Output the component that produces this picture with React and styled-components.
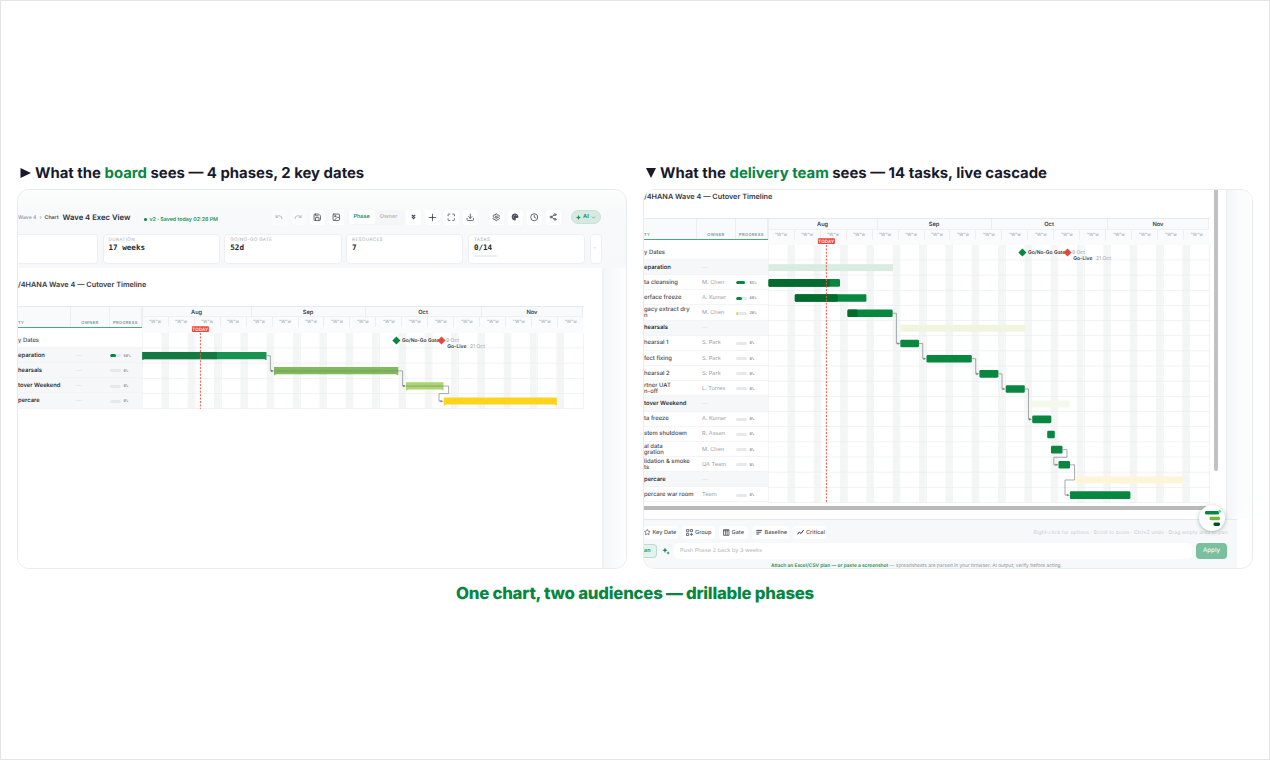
import React from "react";
import styled, { createGlobalStyle } from "styled-components";
import {
  Undo,
  Redo,
  Save,
  Image as ImageIcon,
  Maximize,
  Download,
  Settings,
  Clock,
  Share2,
  ChevronDown,
  Star,
} from "lucide-react";

const green = "#06863f";
const ink = "#181a2c";
const WEEK = 26.33;
const CHART_WIDTH = 441.7;
const ROW = 15.16;

const GlobalStyle = createGlobalStyle`
  * {
    box-sizing: border-box;
  }

  body {
    margin: 0;
    background: #fff;
    font-family: Inter, "Liberation Sans", sans-serif;
    text-rendering: geometricPrecision;
  }
`;

const Page = styled.main`
  width: 1270px;
  height: 760px;
  padding: 161.5px 0 0 16px;
  border: 1px solid #e3e4e6;
  overflow: hidden;
`;

const Columns = styled.div`
  display: grid;
  grid-template-columns: 610px 610px;
  column-gap: 16px;
`;

const Heading = styled.h2`
  display: flex;
  align-items: center;
  gap: 4px;
  height: 20px;
  margin: 0 0 6.5px;
  padding-left: 3px;
  color: ${ink};
  font-size: 14.9px;
  font-weight: 700;
  letter-spacing: 0;
  white-space: nowrap;

  em {
    color: ${green};
    font-style: normal;
  }

  svg {
    flex: none;
  }
`;

const Frame = styled.section`
  display: flex;
  flex-direction: column;
  height: 380px;
  border: 1px solid #e9ecef;
  border-radius: 12px;
  background: ${(props) => props.$background};
  overflow: hidden;
`;

const Footer = styled.p`
  margin: 12.5px 0 0;
  padding-right: 16px;
  color: ${green};
  font-size: 16.8px;
  font-weight: 800;
  line-height: 24px;
  letter-spacing: -0.23px;
  text-align: center;
`;

/* exec view */

const TopBar = styled.div`
  display: flex;
  align-items: center;
  height: 43.6px;
  padding: 11.4px 0 0;
  white-space: nowrap;
`;

const Crumbs = styled.div`
  display: flex;
  align-items: center;
  flex: none;
  width: 251.6px;
  color: #8b929b;
  font-size: 5.2px;
  font-weight: 500;
  padding-top: 2px;

  span + span {
    margin-left: 3px;
  }

  b {
    margin: 0 0 0 3px;
    color: #454c56;
    font-weight: 600;
  }

  strong {
    margin: -1px 0 0 4px;
    color: #2a303a;
    font-size: 7.7px;
    font-weight: 600;
  }

  i {
    width: 3px;
    height: 3px;
    margin: 2px 3px 0 13px;
    border-radius: 50%;
    background: ${green};
  }

  small {
    margin-top: 3px;
    color: #22935a;
    font-size: 5.3px;
    font-weight: 600;
  }
`;

const ToolButton = styled.span`
  display: flex;
  align-items: center;
  justify-content: center;
  flex: none;
  width: 15px;
  height: 15px;
  margin: 0 ${(props) => (props.$last ? "9px" : "2px")} 0 2px;
  border-radius: 3px;
  background: ${(props) => (props.$faded ? "#fafbfc" : "#fff")};
  color: ${(props) => (props.$faded ? "#a9b0b7" : "#454b55")};
`;

const Switcher = styled.div`
  display: flex;
  align-items: center;
  flex: none;
  width: 56px;
  height: 15px;
  margin: 0 0 0 2px;
  padding: 1px;
  border-radius: 4px;
  background: #f4f6f7;
  font-size: 5.5px;
  font-weight: 600;
`;

const SwitchItem = styled.span`
  width: ${(props) => (props.$active ? "26px" : "28px")};
  border-radius: 3px;
  background: ${(props) => (props.$active ? "#fff" : "transparent")};
  color: ${(props) => (props.$active ? "#25925a" : "#b4bac1")};
  line-height: 14px;
  text-align: center;
`;

const AiButton = styled.div`
  display: flex;
  align-items: center;
  justify-content: center;
  gap: 2px;
  width: 30px;
  height: 14px;
  margin-left: 8.4px;
  border: 1px solid #c9e2d7;
  border-radius: 7px;
  background: #d6eae1;
  color: #298b62;
  font-size: 5.6px;
  font-weight: 700;
`;

const Stats = styled.div`
  display: flex;
  gap: 4.5px;
  height: 34.4px;
`;

const Stat = styled.div`
  flex: none;
  width: ${(props) => props.$width || 117.3}px;
  height: 30px;
  padding: ${(props) => (props.$narrow ? "9px 0 0 3px" : "3.5px 5px")};
  border: 1px solid #edf0f2;
  border-left-width: ${(props) => (props.$cut ? 0 : "1px")};
  border-radius: ${(props) => (props.$cut ? "0 4px 4px 0" : "4px")};
  background: #fff;
`;

const StatLabel = styled.div`
  color: #a5abb3;
  font-size: 4.6px;
  line-height: 5px;
  letter-spacing: 0.35px;
`;

const StatValue = styled.div`
  color: #23272f;
  font-family: "DejaVu Sans Mono", monospace;
  font-size: 7.6px;
  font-weight: 700;
  line-height: 10px;
`;

const StatBar = styled.div`
  width: 23px;
  height: 2px;
  margin-top: 2px;
  border-radius: 1px;
  background: #eceff1;
`;

const StatDots = styled.div`
  color: #777e87;
  font-size: 6px;
  line-height: 10px;
`;

const ExecBody = styled.div`
  display: flex;
  flex: 1;
`;

const Sheet = styled.div`
  width: ${(props) => props.$width}px;
  background: #fff;
`;

const ExecGutter = styled.div`
  width: 24px;
  background: linear-gradient(90deg, #eef0f2 0, #f4f6f7 3px, #f9fafb 12px, #fdfdfe 24px);
`;

const ChartTitle = styled.h3`
  margin: 0;
  padding-top: ${(props) => props.$top}px;
  height: ${(props) => props.$height}px;
  color: #333943;
  font-size: 7.3px;
  font-weight: 600;
  line-height: 12px;
  white-space: nowrap;
`;

/* gantt */

const GanttLayout = styled.div`
  display: flex;
  width: 566px;
  border-top: 1px solid #e8ebee;
`;

const List = styled.div`
  flex: none;
  width: 123.6px;
`;

const ListHead = styled.div`
  display: grid;
  grid-template-columns: 53px 39px 31.6px;
  height: 20.6px;
  margin-bottom: 5.2px;
  border-bottom: 1px solid #45ad77;
  background: #f8fafb;
  color: #8d949d;
  font-size: 4.1px;
  font-weight: 600;
  letter-spacing: 0.35px;

  span {
    padding-top: 13px;
    border-right: 1px solid #eceff2;
    line-height: 6px;
    text-align: center;
  }

  span:first-child {
    text-align: left;
  }
`;

const ListRow = styled.div`
  display: grid;
  grid-template-columns: 53px 39px 31.6px;
  align-items: center;
  height: ${ROW}px;
  padding-top: 1.4px;
  border-bottom: 1px solid #f2f4f6;
  background: ${(props) => (props.$group ? "#f5f7f9" : "#fff")};
  color: ${(props) => (props.$group ? "#2e343d" : "#3f4651")};
  font-size: 5.85px;
  font-weight: ${(props) => (props.$group ? 600 : 500)};
  line-height: 6px;
  white-space: pre;
`;

const Owner = styled.span`
  padding-left: 5px;
  color: ${(props) => (props.$empty ? "#dde1e4" : "#989ea6")};
  font-size: 5.6px;
  font-weight: 400;
`;

const Progress = styled.span`
  display: flex;
  align-items: center;
  gap: 3px;
  color: #8d939b;
  font-family: "DejaVu Sans Mono", monospace;
  font-size: 3.9px;
  font-weight: 700;
`;

const ProgressTrack = styled.span`
  width: 10.5px;
  height: 3px;
  border-radius: 2px;
  background: #e6e9ec;
  overflow: hidden;
`;

const ProgressFill = styled.span`
  display: block;
  height: 100%;
  border-radius: 2px;
  background: ${(props) => (props.$low ? "#f5d224" : green)};
`;

const Plot = styled.div`
  width: ${CHART_WIDTH}px;
`;

const Months = styled.div`
  display: grid;
  grid-template-columns: 109px 114px 116px 1fr;
  height: 10.5px;
  border-left: 1px solid #eceff2;
  border-bottom: 1px solid #eef0f3;
  background: #f9fafb;
  color: #3b424c;
  font-size: 5.7px;
  font-weight: 600;
  line-height: 11px;
  text-align: center;

  span {
    border-right: 1px solid #eceff2;
  }
`;

const Weeks = styled.div`
  display: flex;
  height: 15.3px;
  background: #fafbfc;
  color: #949ba4;
  font-size: 4.4px;
  line-height: 12px;
  text-align: center;

  span {
    flex: 0 1 ${WEEK}px;
    height: 10px;
    border-left: 1px solid #edeff2;
  }
`;

const Svg = styled.svg`
  display: block;
  overflow: visible;
  font-family: Inter, sans-serif;
`;

const rowMiddle = (row) => row * ROW + ROW / 2;

const Diamond = ({ x, y, color }) => (
  <path d={`M${x - 4} ${y}L${x} ${y - 4}L${x + 4} ${y}L${x} ${y + 4}Z`} fill={color} />
);

const Bar = ({ row, from, to, done, color, doneColor, kind }) => {
  const y = rowMiddle(row) - 3.8;
  const width = to - from;
  if (kind === "ghost") {
    return <rect x={from} y={y + 0.2} width={width} height="7" fill={color} />;
  }
  if (kind === "summary") {
    return (
      <g fill={color}>
        <path d={`M${from} ${y}H${to}V${y + 8.4}L${to - 2} ${y + 7.2}H${from + 2}L${from} ${y + 8.4}Z`} />
        {done && <rect x={from} y={y} width={done - from} height="7.2" fill={doneColor} />}
      </g>
    );
  }
  return (
    <g>
      <rect x={from} y={y} width={width} height="7.6" rx="1.3" fill="#07873f" />
      {done && <rect x={from} y={y} width={done - from} height="7.6" rx="1.3" fill="#046a2e" />}
    </g>
  );
};

const Gantt = ({ rows, bars, links }) => {
  const height = rows.length * ROW;
  return (
    <GanttLayout>
      <List>
        <ListHead>
          <span>TY</span>
          <span>OWNER</span>
          <span>PROGRESS</span>
        </ListHead>
        {rows.map((row) => (
          <ListRow key={row.name} $group={row.group}>
            <span>{row.name}</span>
            <Owner $empty={!row.owner}>{row.owner || (row.group ? "—" : "")}</Owner>
            {row.progress !== undefined && (
              <Progress>
                <ProgressTrack>
                  <ProgressFill $low={row.progress < 30} style={{ width: `${row.progress}%` }} />
                </ProgressTrack>
                {row.progress}%
              </Progress>
            )}
          </ListRow>
        ))}
      </List>
      <Plot>
        <Months>
          {["Aug", "Sep", "Oct", "Nov"].map((month) => (
            <span key={month}>{month}</span>
          ))}
        </Months>
        <Weeks>
          {Array.from({ length: 17 }, (_, i) => (
            <span key={i}>"W"w</span>
          ))}
        </Weeks>
        <Svg width={CHART_WIDTH} height={height}>
          {Array.from({ length: 17 }, (_, i) => (
            <g key={i}>
              {i < 16 && <rect x={i * WEEK + 19.4} width="6.6" height={height} fill="#f4f5f5" />}
              <rect x={i * WEEK} width="0.6" height={height} fill="#eceef0" />
            </g>
          ))}
          {rows.map((row, i) => (
            <rect key={row.name} y={(i + 1) * ROW - 0.6} width={CHART_WIDTH} height="0.7" fill="#ebedef" />
          ))}
          <rect x={CHART_WIDTH - 0.6} width="0.6" height={height} fill="#e8ebee" />
          {bars.map((bar) => (
            <Bar key={`${bar.row}-${bar.from}`} {...bar} />
          ))}
          {links.map((link) => (
            <g key={link.d} fill="none" stroke="#80868d" strokeWidth="0.7">
              <path d={link.d} />
              <path
                d={`M${link.x - 3} ${link.y - 1.3}L${link.x} ${link.y}L${link.x - 3} ${link.y + 1.3}Z`}
                fill="#80868d"
                stroke="none"
              />
            </g>
          ))}
          <path d={`M58.4 0V${height}`} stroke="#f0574b" strokeWidth="1" strokeDasharray="2 1.4" />
          <rect x="49.9" y="-6.8" width="17" height="5.8" rx="0.8" fill="#ee443a" />
          <text x="58.4" y="-2.4" textAnchor="middle" fill="#fff" fontSize="4.4" fontWeight="600" letterSpacing="0.2">
            TODAY
          </text>
          <text x="304" y="9.4" fill="#9ba1a9" fontSize="5">
            9 Oct
          </text>
          <Diamond x={254.4} y={7.6} color="#07873f" />
          <text x="260" y="9.4" fill="#363d47" fontSize="5" fontWeight="600">
            Go/No-Go Gate
          </text>
          <Diamond x={299.5} y={7.6} color="#ee443a" />
          <text x="305.3" y="15.4" fill="#363d47" fontSize="5" fontWeight="600">
            Go-Live
          </text>
          <text x="328" y="15.4" fill="#9ba1a9" fontSize="5">
            21 Oct
          </text>
        </Svg>
      </Plot>
    </GanttLayout>
  );
};

const execRows = [
  { name: "y Dates" },
  { name: "eparation", group: true, progress: 60 },
  { name: "hearsals", group: true, progress: 0 },
  { name: "tover Weekend", group: true, progress: 0 },
  { name: "percare", group: true, progress: 0 },
];

const execBars = [
  { row: 1, from: 0.3, to: 124.5, done: 75, color: "#1a9250", doneColor: "#147a42", kind: "summary" },
  { row: 2, from: 132, to: 256.3, color: "#7fbb56", kind: "summary" },
  { row: 3, from: 264, to: 301.5, color: "#abd56d", kind: "summary" },
  { row: 4, from: 301.8, to: 414.8, color: "#fdd41b", kind: "summary" },
];

const mid = rowMiddle;

const execLinks = [
  { d: `M124.3 ${mid(1)}H128.4V${mid(2)}H131`, x: 132, y: mid(2) },
  { d: `M132 ${mid(2)}H260.6V${mid(3)}H263`, x: 264, y: mid(3) },
  { d: `M264 ${mid(3)}H306.6V${mid(3) + 7.6}H297V${mid(4)}H300`, x: 301.5, y: mid(4) },
];

const teamRows = [
  { name: "y Dates" },
  { name: "eparation", group: true },
  { name: "ta cleansing", owner: "M. Chen", progress: 85 },
  { name: "erface freeze", owner: "A. Kumar", progress: 60 },
  { name: "gacy extract dry\nn", owner: "M. Chen", progress: 20 },
  { name: "hearsals", group: true },
  { name: "hearsal 1", owner: "S. Park", progress: 0 },
  { name: "fect fixing", owner: "S. Park", progress: 0 },
  { name: "hearsal 2", owner: "S. Park", progress: 0 },
  { name: "rtner UAT\nn-off", owner: "L. Torres", progress: 0 },
  { name: "tover Weekend", group: true },
  { name: "ta freeze", owner: "A. Kumar", progress: 0 },
  { name: "stem shutdown", owner: "R. Assan", progress: 0 },
  { name: "al data\ngration", owner: "M. Chen", progress: 0 },
  { name: "lidation & smoke\nts", owner: "QA Team", progress: 0 },
  { name: "percare", group: true },
  { name: "percare war room", owner: "Team", progress: 0 },
];

const teamBars = [
  { row: 1, from: 0.5, to: 125, color: "#d9ece1", kind: "ghost" },
  { row: 2, from: 0.5, to: 72, done: 61.7 },
  { row: 3, from: 26.8, to: 98.4, done: 69.8 },
  { row: 4, from: 79.5, to: 124.7, done: 89.5 },
  { row: 5, from: 132.5, to: 257, color: "#f1f5df", kind: "ghost" },
  { row: 6, from: 132.3, to: 151 },
  { row: 7, from: 158.5, to: 203.8 },
  { row: 8, from: 211.4, to: 230.4 },
  { row: 9, from: 237.7, to: 256.8 },
  { row: 10, from: 263.8, to: 302, color: "#f4f9ec", kind: "ghost" },
  { row: 11, from: 264.2, to: 283.3 },
  { row: 12, from: 279.2, to: 286.8 },
  { row: 13, from: 283, to: 294.5 },
  { row: 14, from: 290.5, to: 302 },
  { row: 15, from: 308, to: 415, color: "#fef5d8", kind: "ghost" },
  { row: 16, from: 301.9, to: 362.4 },
];

const teamLinks = [
  { d: `M124.5 ${mid(4)}H128.4V${mid(6)}H131`, x: 132.3, y: mid(6) },
  { d: `M151 ${mid(6)}H154.7V${mid(7)}H157`, x: 158.5, y: mid(7) },
  { d: `M203.8 ${mid(7)}H207.7V${mid(8)}H210`, x: 211.3, y: mid(8) },
  { d: `M230.3 ${mid(8)}H234V${mid(9)}H236`, x: 237.6, y: mid(9) },
  { d: `M256.8 ${mid(9)}H260.5V${mid(11)}H263`, x: 264, y: mid(11) },
  { d: `M294.4 ${mid(13)}H299V${mid(13) + 7.6}H285.8V${mid(14)}H289`, x: 290.4, y: mid(14) },
  { d: `M302 ${mid(14)}H306.6V${mid(15)}H297V${mid(16)}H300`, x: 301.8, y: mid(16) },
];

/* delivery view */

const TeamTop = styled.div`
  display: flex;
  height: 329px;
`;

const TeamSheet = styled.div`
  width: 583.5px;
  height: 329px;
  border-right: 1px solid #eaedf0;
  background: #fff;
`;

const SheetRow = styled.div`
  display: flex;
  height: 315px;
  overflow: hidden;
`;

const ScrollThumb = styled.div`
  width: 4px;
  height: 281px;
  margin-left: 4px;
  border-radius: 0 0 2px 2px;
  background: #c1c1c2;
`;

const HorizontalThumb = styled.div`
  width: 564px;
  height: 3.6px;
  margin-top: 1px;
  background: #bababb;
`;

const TeamGutter = styled.div`
  width: 25.5px;
  background: linear-gradient(90deg, #f3f5f6 0, #f9fafb 9px, #fbfcfc 10px, #fdfdfd 26px);
`;

const TeamBottom = styled.div`
  width: 592.5px;
  height: 50px;
  padding-top: 6px;
  border-top: 1px solid #e6e9eb;
  background: #f6f8f9;
  white-space: nowrap;
`;

const Actions = styled.div`
  display: flex;
  align-items: center;
  gap: 4px;
  height: 13px;
`;

const Action = styled.span`
  display: flex;
  align-items: center;
  gap: 2px;
  flex: none;
  width: ${(props) => props.$width}px;
  height: 13px;
  padding-left: ${(props) => (props.$first ? 0 : "4px")};
  border-radius: 3px;
  background: #fff;
  color: #4c535d;
  font-size: 5.6px;
  font-weight: 500;
`;

const Hint = styled.span`
  margin-left: auto;
  margin-right: 9px;
  color: #c8cdd2;
  font-size: 5.1px;
  letter-spacing: 0.1px;
`;

const Prompt = styled.div`
  display: flex;
  align-items: center;
  height: 16px;
  margin-top: 4px;
`;

const PlanButton = styled.span`
  width: 13px;
  height: 14px;
  border: 1px solid #b9dccb;
  border-left: 0;
  border-radius: 0 4px 4px 0;
  background: #e4f2eb;
  color: #30875c;
  font-size: 5.5px;
  font-weight: 600;
  line-height: 12px;
`;

const PromptInput = styled.span`
  width: 518px;
  height: 16px;
  margin-left: 4px;
  padding-left: 6px;
  border-radius: 5px;
  background: #fff;
  color: #b1b6bc;
  font-size: 5.6px;
  line-height: 16px;
`;

const Apply = styled.span`
  width: 31px;
  height: 16px;
  margin-left: 4px;
  border-radius: 4px;
  background: #7ac0a0;
  color: #e9f8f0;
  font-size: 6.2px;
  font-weight: 500;
  line-height: 16px;
  text-align: center;
`;

const Note = styled.div`
  margin-top: 3.7px;
  padding-left: 127px;
  color: #8b939b;
  font-size: 4.85px;
  line-height: 7px;

  b {
    color: #1c8f53;
    font-weight: 600;
  }
`;

// floats over the corner of the sheet and the bottom bar
const Launcher = styled.div`
  position: absolute;
  right: 27px;
  bottom: 37px;
  display: flex;
  align-items: center;
  justify-content: center;
  width: 26px;
  height: 26px;
  border-radius: 50%;
  background: #fff;
  box-shadow: 0 1px 4px rgba(0, 80, 50, 0.35);
`;

const TeamFrame = styled(Frame)`
  position: relative;
`;

const SparkleIcon = styled.svg`
  flex: none;
  margin-left: 5px;
`;

const icon = { size: 8.5, strokeWidth: 2.3 };

const CollapseIcon = () => (
  <svg width="5" height="6" viewBox="0 0 5 6" fill="none" stroke="currentColor" strokeWidth="1.1">
    <path d="M0.8 0.9L2.5 2.5L4.2 0.9M0.8 2.9L2.5 4.6L4.2 2.9" />
  </svg>
);

const CrossIcon = () => (
  <svg width="9" height="9" viewBox="0 0 9 9" fill="none" stroke="currentColor" strokeWidth="0.8">
    <path d="M4.5 0.8V8.2M0.8 4.5H8.2" />
    <circle cx="4.5" cy="4.5" r="0.8" fill="currentColor" />
  </svg>
);

const PaletteIcon = () => (
  <svg width="8" height="8" viewBox="0 0 8 8">
    <path
      d="M4 0.6C1.9 0.6 0.7 2.1 0.7 3.9C0.7 5.9 2.2 7.4 4 7.4C4.9 7.4 4.9 6.8 4.7 6.2C4.5 5.5 4.9 5 5.6 5H6.4C7 5 7.4 4.6 7.4 3.8C7.3 1.9 5.9 0.6 4 0.6Z"
      fill="#4d535c"
    />
    <circle cx="2.3" cy="4" r="0.5" fill="#c5c8cc" />
    <circle cx="3.4" cy="2.3" r="0.5" fill="#c5c8cc" />
    <circle cx="5.3" cy="2.6" r="0.5" fill="#c5c8cc" />
  </svg>
);

const GroupIcon = () => (
  <svg width="7" height="7" viewBox="0 0 7 7" fill="none" stroke="currentColor" strokeWidth="0.8">
    <path d="M0.5 0.5H2.7V2.7H0.5ZM4.3 0.5H6.5V2.7H4.3ZM0.5 4.3H2.7V6.5H0.5ZM5.4 4V6.9M4 5.4H6.9" />
  </svg>
);

const GateIcon = () => (
  <svg width="6.5" height="7" viewBox="0 0 6.5 7" fill="none" stroke="currentColor" strokeWidth="0.8">
    <path d="M0.5 0.7H6V6.3H0.5ZM2.4 0.7V6.3M4.1 0.7V6.3M0.5 1.8H6" />
  </svg>
);

const BaselineIcon = () => (
  <svg width="6.5" height="7" viewBox="0 0 6.5 7" fill="none" stroke="currentColor" strokeWidth="1">
    <path d="M0.3 1.4H6.2M0.3 3.2H5.2M0.3 5H3.3" />
  </svg>
);

const CriticalIcon = () => (
  <svg width="7" height="7" viewBox="0 0 7 7" fill="none" stroke="#2d333c" strokeWidth="1">
    <path d="M0.4 5.4L2.4 3L4 4.6L6.4 1.4" />
    <circle cx="6.3" cy="1.4" r="0.5" fill="#2d333c" stroke="none" />
  </svg>
);

const ExecView = () => (
  <Frame $background="linear-gradient(#fdfdfd 0, #fafbfb 12px, #f7f9fa 26px, #f7f8f9 80px)">
    <TopBar>
      <Crumbs>
        <span>Wave 4</span>
        <span>›</span>
        <b>Chart</b>
        <strong>Wave 4 Exec View</strong>
        <i />
        <small>v2 · Saved today 02:26 PM</small>
      </Crumbs>
      <ToolButton $faded><Undo {...icon} size={8} /></ToolButton>
      <ToolButton $faded><Redo {...icon} size={8} /></ToolButton>
      <ToolButton><Save {...icon} /></ToolButton>
      <ToolButton><ImageIcon {...icon} /></ToolButton>
      <Switcher>
        <SwitchItem $active>Phase</SwitchItem>
        <SwitchItem>Owner</SwitchItem>
      </Switcher>
      <ToolButton><CollapseIcon /></ToolButton>
      <ToolButton><CrossIcon /></ToolButton>
      <ToolButton><Maximize {...icon} /></ToolButton>
      <ToolButton $last><Download {...icon} /></ToolButton>
      <ToolButton><Settings {...icon} /></ToolButton>
      <ToolButton><PaletteIcon /></ToolButton>
      <ToolButton><Clock {...icon} /></ToolButton>
      <ToolButton><Share2 {...icon} size={8} /></ToolButton>
      <AiButton>
        <svg width="5" height="5" viewBox="0 0 10 10">
          <path d="M5 0L6.6 3.4L10 5L6.6 6.6L5 10L3.4 6.6L0 5L3.4 3.4Z" fill="currentColor" />
        </svg>
        AI
        <ChevronDown size={5} strokeWidth={2.5} />
      </AiButton>
    </TopBar>
    <Stats>
      <Stat $width={80} $cut />
      <Stat>
        <StatLabel>DURATION</StatLabel>
        <StatValue>17 weeks</StatValue>
      </Stat>
      <Stat>
        <StatLabel>GO/NO-GO GATE</StatLabel>
        <StatValue>52d</StatValue>
      </Stat>
      <Stat>
        <StatLabel>RESOURCES</StatLabel>
        <StatValue>7</StatValue>
      </Stat>
      <Stat>
        <StatLabel>TASKS</StatLabel>
        <StatValue>0/14</StatValue>
        <StatBar />
      </Stat>
      <Stat $width={12} $narrow>
        <StatDots>·</StatDots>
      </Stat>
    </Stats>
    <ExecBody>
      <Sheet $width={584}>
        <ChartTitle $top={11} $height={38}>/4HANA Wave 4 — Cutover Timeline</ChartTitle>
        <Gantt rows={execRows} bars={execBars} links={execLinks} />
      </Sheet>
      <ExecGutter />
    </ExecBody>
  </Frame>
);

const TeamView = () => (
  <TeamFrame $background="#fff">
    <TeamTop>
      <TeamSheet>
        <SheetRow>
          <div>
            <ChartTitle $top={1} $height={28}>/4HANA Wave 4 — Cutover Timeline</ChartTitle>
            <Gantt rows={teamRows} bars={teamBars} links={teamLinks} />
          </div>
          <ScrollThumb />
        </SheetRow>
        <HorizontalThumb />
      </TeamSheet>
      <TeamGutter />
    </TeamTop>
    <TeamBottom>
      <Actions>
        <Action $width={34} $first><Star size={6.5} strokeWidth={2.6} />Key Date</Action>
        <Action $width={33}><GroupIcon />Group</Action>
        <Action $width={29}><GateIcon />Gate</Action>
        <Action $width={37}><BaselineIcon />Baseline</Action>
        <Action $width={33}><CriticalIcon />Critical</Action>
        <Hint>Right-click for options · Scroll to zoom · Ctrl+Z undo · Drag empty area to pan</Hint>
      </Actions>
      <Prompt>
        <PlanButton>an</PlanButton>
        <SparkleIcon width="8" height="8" viewBox="0 0 8 8" fill="#1a8653">
          <path d="M3 0.4L3.8 2.4L5.8 3.2L3.8 4L3 6L2.2 4L0.2 3.2L2.2 2.4Z" />
          <path d="M6.1 4.2L6.6 5.5L7.9 6L6.6 6.5L6.1 7.8L5.6 6.5L4.3 6L5.6 5.5Z" />
        </SparkleIcon>
        <PromptInput>Push Phase 2 back by 3 weeks</PromptInput>
        <Apply>Apply</Apply>
      </Prompt>
      <Note>
        <b>Attach an Excel/CSV plan — or paste a screenshot</b> — spreadsheets are parsed in your browser. AI output; verify before acting.
      </Note>
    </TeamBottom>
    <Launcher>
      <svg width="17" height="17" viewBox="0 0 17 17">
        <rect x="1" y="1" width="14" height="3.6" rx="1.4" fill="#08873f" />
        <rect x="5.5" y="6.8" width="10.5" height="3.4" rx="1.4" fill="#74b43a" />
        <rect x="9.5" y="12.6" width="6.5" height="3.4" rx="1.4" fill="#064d2c" />
        <circle cx="15.6" cy="1.4" r="1.4" fill="#4ddb83" />
      </svg>
    </Launcher>
  </TeamFrame>
);

const App = () => (
  <>
    <GlobalStyle />
    <Page>
      <Columns>
        <div>
          <Heading>
            <svg width="11" height="10" viewBox="0 0 11 10">
              <path d="M0.5 0L11 5L0.5 10Z" fill={ink} />
            </svg>
            <span>
              What the <em>board</em> sees — 4 phases, 2 key dates
            </span>
          </Heading>
          <ExecView />
        </div>
        <div>
          <Heading>
            <svg width="10" height="10" viewBox="0 0 10 10">
              <path d="M0 0H10L5 10Z" fill={ink} />
            </svg>
            <span>
              What the <em>delivery team</em> sees — 14 tasks, live cascade
            </span>
          </Heading>
          <TeamView />
        </div>
      </Columns>
      <Footer>One chart, two audiences — drillable phases</Footer>
    </Page>
  </>
);

export default App;
